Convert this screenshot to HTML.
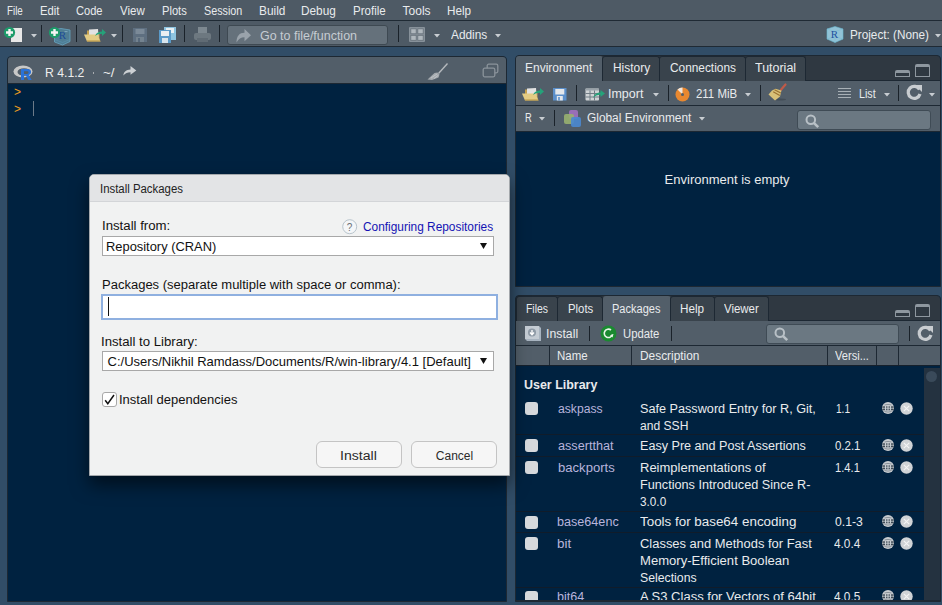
<!DOCTYPE html>
<html><head><meta charset="utf-8"><style>
html,body{margin:0;padding:0;width:942px;height:605px;overflow:hidden;background:#33506a}
body>*, body div>*{position:absolute}
div,svg{position:absolute;box-sizing:border-box}
svg{overflow:visible}
</style></head><body>
<div style="left:0px;top:0px;width:942px;height:605px;background:#314d67;"></div>
<div style="left:0px;top:0px;width:942px;height:20px;background:#4e5a65;"></div>
<div style="left:0px;top:20px;width:942px;height:1px;background:#1f2a34;"></div>
<div style="left:0px;top:21px;width:942px;height:25px;background:#4e5a65;"></div>
<div style="left:0px;top:46px;width:942px;height:1px;background:#1f2a34;"></div>
<div style="left:7.00px;top:5px;font:12px/12px 'Liberation Sans';color:#e9ebed;white-space:pre;transform:scaleX(0.8137);transform-origin:0 0;">File</div>
<div style="left:40.30px;top:5px;font:12px/12px 'Liberation Sans';color:#e9ebed;white-space:pre;transform:scaleX(0.9417);transform-origin:0 0;">Edit</div>
<div style="left:76.40px;top:5px;font:12px/12px 'Liberation Sans';color:#e9ebed;white-space:pre;transform:scaleX(0.9237);transform-origin:0 0;">Code</div>
<div style="left:120.00px;top:5px;font:12px/12px 'Liberation Sans';color:#e9ebed;white-space:pre;transform:scaleX(0.9569);transform-origin:0 0;">View</div>
<div style="left:161.50px;top:5px;font:12px/12px 'Liberation Sans';color:#e9ebed;white-space:pre;transform:scaleX(0.9296);transform-origin:0 0;">Plots</div>
<div style="left:203.60px;top:5px;font:12px/12px 'Liberation Sans';color:#e9ebed;white-space:pre;transform:scaleX(0.8972);transform-origin:0 0;">Session</div>
<div style="left:258.50px;top:5px;font:12px/12px 'Liberation Sans';color:#e9ebed;white-space:pre;transform:scaleX(0.9881);transform-origin:0 0;">Build</div>
<div style="left:301.30px;top:5px;font:12px/12px 'Liberation Sans';color:#e9ebed;white-space:pre;transform:scaleX(0.9831);transform-origin:0 0;">Debug</div>
<div style="left:352.50px;top:5px;font:12px/12px 'Liberation Sans';color:#e9ebed;white-space:pre;transform:scaleX(0.9610);transform-origin:0 0;">Profile</div>
<div style="left:402.60px;top:5px;font:12px/12px 'Liberation Sans';color:#e9ebed;white-space:pre;">Tools</div>
<div style="left:447.30px;top:5px;font:12px/12px 'Liberation Sans';color:#e9ebed;white-space:pre;transform:scaleX(0.9758);transform-origin:0 0;">Help</div>
<div style="left:41px;top:25px;width:1px;height:17px;background:#1a222a;"></div>
<div style="left:76px;top:25px;width:1px;height:17px;background:#1a222a;"></div>
<div style="left:122px;top:25px;width:1px;height:17px;background:#1a222a;"></div>
<div style="left:184px;top:25px;width:1px;height:17px;background:#1a222a;"></div>
<div style="left:219px;top:25px;width:1px;height:17px;background:#1a222a;"></div>
<div style="left:398px;top:25px;width:1px;height:17px;background:#1a222a;"></div>
<svg style="left:3px;top:26px" width="22" height="18"><rect x="8" y="2" width="11" height="14" fill="#e8e8e8"/><circle cx="6.5" cy="6.5" r="5.6" fill="#1c9c6a"/><path d="M6.5 3v7M3 6.5h7" stroke="#f4f4f4" stroke-width="2.4"/></svg>
<svg style="left:31px;top:34px" width="6" height="4"><path d="M0 0H6L3.0 3.5Z" fill="#c8cdd2"/></svg>
<svg style="left:44px;top:22px" width="32" height="24"><path d="M10.5 7.5L17 6.5L26 8V19.5L18.5 23L10.5 20z" fill="#4f7d94" stroke="#68a6c2" stroke-width=".8"/><path d="M10.5 17.5L18.5 20.5L26 17.5" fill="none" stroke="#5b94b0" stroke-width=".6"/><text x="14.8" y="17" font-size="11" fill="#1d4c98" font-family="Liberation Serif">R</text><path d="M20.5 9.6h3" stroke="#8ab4c8" stroke-width=".8"/><circle cx="10.5" cy="10.5" r="5.6" fill="#1c9c6a"/><path d="M10.5 7v7M7 10.5h7" stroke="#f4f4f4" stroke-width="2.4"/></svg>
<svg style="left:84px;top:28px" width="24" height="15"><path d="M3 2.5H9L10.5 4H15.5V13H3Z" fill="#c4a04e"/><path d="M5 1.5L14 1L14.5 9L5 9Z" fill="#e2e2e2"/><path d="M0 6.5H13.5L16.5 13.5H3Z" fill="#e4cc84"/><path d="M3 13.5H16.5L16 12.5H2.6Z" fill="#b89440"/><path d="M11 8C12.5 4.5 15 3.5 18 3.5V1L22 4.5L18 8V5.8C15.5 5.8 13 6.5 11 8Z" fill="#25a27a"/></svg>
<svg style="left:111px;top:34px" width="6" height="4"><path d="M0 0H6L3.0 3.5Z" fill="#c8cdd2"/></svg>
<svg style="left:133px;top:28px" width="15" height="15"><rect x="0" y="0" width="14" height="14" fill="#5e6f80"/><rect x="2.5" y="1" width="9" height="5" fill="#7b8a98"/><rect x="3" y="9" width="8" height="5" fill="#74838f"/><rect x="5" y="10" width="2" height="4" fill="#56687a"/></svg>
<svg style="left:159px;top:27px" width="18" height="16"><rect x="5" y="0" width="12" height="13" fill="#8ec4e0"/><rect x="7" y="1" width="8" height="5" fill="#e8f0f4"/><rect x="0" y="3" width="12" height="13" fill="#5a9ac8"/><rect x="2" y="4" width="8" height="5" fill="#e8eef2"/><rect x="3" y="11" width="6" height="5" fill="#d8e4ec"/></svg>
<svg style="left:194px;top:27px" width="17" height="16"><rect x="4" y="0" width="9" height="6" fill="#7d8890"/><rect x="0" y="6" width="17" height="7" rx="2" fill="#6d7880"/><rect x="3" y="11" width="11" height="4" fill="#606b74"/></svg>
<div style="left:227px;top:25px;width:161px;height:20px;background:#65717b;border:1px solid #3e4952;border-radius:3px"></div>
<svg style="left:236px;top:28px" width="15" height="15"><path d="M0.5 14.5C0.5 8 3.5 4.8 8.5 4.8V1L15 7.2L8.5 13.2V9.3C5 9.3 2.5 11 0.5 14.5Z" fill="#9aa3ab"/></svg>
<div style="left:259.80px;top:30px;font:12px/12px 'Liberation Sans';color:#c5ccd2;white-space:pre;transform:scaleX(1.0387);transform-origin:0 0;">Go to file/function</div>
<svg style="left:409px;top:27px" width="16" height="15"><rect x="0" y="0" width="16" height="15" rx="1" fill="#87919a"/><g fill="#afb7bd" stroke="#66717a" stroke-width=".8"><rect x="1.8" y="1.8" width="5.4" height="5"/><rect x="8.8" y="1.8" width="5.4" height="5"/><rect x="1.8" y="8.3" width="5.4" height="5"/><rect x="8.8" y="8.3" width="5.4" height="5"/></g></svg>
<svg style="left:434px;top:34px" width="6" height="4"><path d="M0 0H6L3.0 3.5Z" fill="#c8cdd2"/></svg>
<div style="left:451.00px;top:29px;font:12px/12px 'Liberation Sans';color:#e9ebed;white-space:pre;transform:scaleX(0.9893);transform-origin:0 0;">Addins</div>
<svg style="left:495px;top:34px" width="6" height="4"><path d="M0 0H6L3.0 3.5Z" fill="#c8cdd2"/></svg>
<svg style="left:826px;top:26px" width="18" height="17"><path d="M9 0.5l8 2.5v10L9 16.5 1 13V3z" fill="#92c2d6" stroke="#6ab8d0" stroke-width=".6"/><path d="M1 3L9 5.5L17 3M9 5.5v11M1 13l8-2.5 8 2.5" stroke="#78b8d0" stroke-width=".5" fill="none"/><text x="4.8" y="12.2" font-size="11" fill="#2452a0" font-family="Liberation Serif">R</text></svg>
<div style="left:849.50px;top:29px;font:12px/12px 'Liberation Sans';color:#e9ebed;white-space:pre;transform:scaleX(0.9777);transform-origin:0 0;">Project: (None)</div>
<svg style="left:935px;top:34px" width="6" height="4"><path d="M0 0H6L3.0 3.5Z" fill="#c8cdd2"/></svg>
<div style="left:7px;top:56px;width:500px;height:546px;background:#002240;border:1px solid #1d2833;box-sizing:border-box;border-radius:4px 4px 0 0"></div>
<div style="left:8px;top:57px;width:498px;height:26px;background:#525e69;border-radius:3px 3px 0 0"></div>
<div style="left:8px;top:83px;width:498px;height:1px;background:#1d2833;"></div>
<svg style="left:13px;top:64px" width="22" height="18"><ellipse cx="10" cy="7.5" rx="9.5" ry="6" fill="#c8c8c8"/><ellipse cx="11" cy="8" rx="6.5" ry="3.8" fill="#525e69"/><path d="M8 5h6.5c2.5 0 3.5 1.3 3.5 3s-1 2.6-2.3 3l3 5h-3.3l-2.6-4.5H11V16H8z M11 7.3v2.6h3c1 0 1.5-.5 1.5-1.3s-.5-1.3-1.5-1.3z" fill="#2a72d8" fill-rule="evenodd"/></svg>
<div style="left:45.26px;top:66px;font:13px/13px 'Liberation Sans';color:#eeeeee;white-space:pre;transform:scaleX(0.9390);transform-origin:0 0;">R 4.1.2</div>
<div style="left:93px;top:72px;width:1px;height:2px;background:#a8acb0"></div>
<div style="left:102.70px;top:66px;font:13px/13px 'Liberation Sans';color:#eeeeee;white-space:pre;transform:scaleX(1.0266);transform-origin:0 0;">~/</div>
<svg style="left:122.5px;top:66px" width="14" height="10"><path d="M0.3 9.5C0.8 5.5 3 3.6 7.5 3.4V0L13.3 4.5L7.5 8.8V6.2C4.5 6.2 2.5 7 0.3 9.5Z" fill="#ccd0d4"/></svg>
<svg style="left:426px;top:62px" width="24" height="20"><path d="M21.5 1.5L12.5 11.5" stroke="#b4b8bc" stroke-width="1.4"/><path d="M1.5 17.5L8.5 11L11.5 10.5L13.5 12.5L12.5 15.5L6 18z" fill="#a4a9ae"/><path d="M5 16l6-4M8 16.5l4-3" stroke="#c8ccd0" stroke-width=".7"/></svg>
<svg style="left:482px;top:63px" width="17" height="15"><rect x="5.2" y="1.2" width="10.6" height="8.6" rx="1.5" fill="none" stroke="#8a939b" stroke-width="1.3"/><rect x="1.2" y="5.2" width="11.6" height="8.6" rx="1.5" fill="#525e69" stroke="#8a939b" stroke-width="1.3"/></svg>
<div style="left:14.00px;top:86px;font:12px/12px 'Liberation Sans';color:#f0a020;white-space:pre;">&gt;</div>
<div style="left:14.00px;top:103px;font:12px/12px 'Liberation Sans';color:#f0a020;white-space:pre;">&gt;</div>
<div style="left:33px;top:101px;width:1px;height:15px;background:#6c7a88;"></div>
<div style="left:515px;top:55px;width:426px;height:232px;background:#002240;border:1px solid #1d2833;box-sizing:border-box;border-radius:4px 4px 0 0"></div>
<div style="left:516px;top:56px;width:424px;height:25px;background:#2f3841;border-radius:3px 3px 0 0"></div>
<div style="left:516px;top:80px;width:424px;height:1px;background:#1d2833;"></div>
<div style="left:516px;top:56px;width:87px;height:25px;background:#525e69;border-radius:3px 3px 0 0"></div>
<div style="left:525.00px;top:62px;font:12px/12px 'Liberation Sans';color:#e9ebed;white-space:pre;">Environment</div>
<div style="left:602px;top:56px;width:58px;height:25px;background:#39434c;border:1px solid #1d2833;border-bottom:none;border-radius:3px 3px 0 0"></div>
<div style="left:612.50px;top:62px;font:12px/12px 'Liberation Sans';color:#e9ebed;white-space:pre;transform:scaleX(0.9937);transform-origin:0 0;">History</div>
<div style="left:659px;top:56px;width:87px;height:25px;background:#39434c;border:1px solid #1d2833;border-bottom:none;border-radius:3px 3px 0 0"></div>
<div style="left:669.50px;top:62px;font:12px/12px 'Liberation Sans';color:#e9ebed;white-space:pre;transform:scaleX(0.9879);transform-origin:0 0;">Connections</div>
<div style="left:745px;top:56px;width:61px;height:25px;background:#39434c;border:1px solid #1d2833;border-bottom:none;border-radius:3px 3px 0 0"></div>
<div style="left:755.30px;top:62px;font:12px/12px 'Liberation Sans';color:#e9ebed;white-space:pre;transform:scaleX(1.0385);transform-origin:0 0;">Tutorial</div>
<svg style="left:894px;top:63px" width="38" height="15"><path d="M1 14V9a2 2 0 0 1 2-2h11a2 2 0 0 1 2 2v5z" fill="#8e979f"/><rect x="2" y="10" width="13" height="3" fill="#2f3841"/><path d="M21 14V3a2 2 0 0 1 2-2h11a2 2 0 0 1 2 2v11z" fill="#8e979f"/><rect x="22" y="4" width="13" height="9" fill="#2f3841"/></svg>
<div style="left:516px;top:81px;width:424px;height:24px;background:#525e69;"></div>
<div style="left:516px;top:105px;width:424px;height:1px;background:#1d2833;"></div>
<div style="left:516px;top:106px;width:424px;height:25px;background:#525e69;"></div>
<div style="left:516px;top:131px;width:424px;height:1px;background:#1d2833;"></div>
<div style="left:576px;top:85px;width:1px;height:16px;background:#1a222a;"></div>
<div style="left:668px;top:85px;width:1px;height:16px;background:#1a222a;"></div>
<div style="left:760px;top:85px;width:1px;height:16px;background:#1a222a;"></div>
<div style="left:898px;top:85px;width:1px;height:16px;background:#1a222a;"></div>
<div style="left:554px;top:110px;width:1px;height:16px;background:#1a222a;"></div>
<svg style="left:521.5px;top:87px" width="24" height="15"><path d="M3 2.5H9L10.5 4H15.5V13H3Z" fill="#c4a04e"/><path d="M5 1.5L14 1L14.5 9L5 9Z" fill="#e2e2e2"/><path d="M0 6.5H13.5L16.5 13.5H3Z" fill="#e4cc84"/><path d="M3 13.5H16.5L16 12.5H2.6Z" fill="#b89440"/><path d="M11 8C12.5 4.5 15 3.5 18 3.5V1L22 4.5L18 8V5.8C15.5 5.8 13 6.5 11 8Z" fill="#25a27a"/></svg>
<svg style="left:552.5px;top:87.5px" width="14" height="13"><rect x="0" y="0" width="13.5" height="12.5" fill="#5b8fca"/><rect x="2.3" y="1" width="9" height="5.5" fill="#e4e8ec"/><rect x="3.8" y="8" width="6" height="4.5" fill="#e4e8ec"/><rect x="5.2" y="9" width="1.6" height="3.5" fill="#5b8fca"/></svg>
<svg style="left:585px;top:87.5px" width="22" height="14"><rect x="0.5" y="0.5" width="13.5" height="12" rx="1" fill="#cfd3d6"/><rect x="0.5" y="0.5" width="13.5" height="2" fill="#9aa3aa"/><path d="M0.5 5.5h13.5M0.5 9h13.5M5 2.5v10M9.5 2.5v10" stroke="#717c85" stroke-width="1"/><path d="M8 10C9.5 6 12 4.5 15.5 4.5V2L20 5.5L15.5 9V6.8C12.5 6.8 10 7.8 8 10Z" fill="#25a27a"/></svg>
<div style="left:607.96px;top:88px;font:12px/12px 'Liberation Sans';color:#e9ebed;white-space:pre;transform:scaleX(1.0394);transform-origin:0 0;">Import</div>
<svg style="left:653px;top:93px" width="6" height="4"><path d="M0 0H6L3.0 3.5Z" fill="#c8cdd2"/></svg>
<svg style="left:675px;top:87px" width="15" height="15"><circle cx="7.5" cy="7.5" r="7" fill="#e88830"/><path d="M7.5 7.5V0.5A7 7 0 0 0 2.5 2.6z" fill="#f0e8e0"/><circle cx="7.5" cy="7.5" r="1.5" fill="#525e69"/></svg>
<div style="left:695.50px;top:88px;font:12px/12px 'Liberation Sans';color:#e9ebed;white-space:pre;transform:scaleX(0.9530);transform-origin:0 0;">211 MiB</div>
<svg style="left:745px;top:93px" width="6" height="4"><path d="M0 0H6L3.0 3.5Z" fill="#c8cdd2"/></svg>
<svg style="left:760px;top:80px" width="30" height="26"><ellipse cx="20" cy="19.5" rx="6" ry="1" fill="#3a444c" opacity=".6"/><path d="M25.5 4.5L21 9.8" stroke="#c05a48" stroke-width="2.2" stroke-linecap="round"/><path d="M15.5 8.8L21.5 10.5L20 16.5L15 20.5L8.5 14.5L12 10.5z" fill="#d8c078"/><path d="M14.5 9.8L20.8 13M13.2 11.8L19.8 15.5" stroke="#9a7030" stroke-width="1.1"/></svg>
<svg style="left:838px;top:88px" width="14" height="11"><path d="M0 .5h13M0 3.5h13M0 6.5h13M0 9.5h13" stroke="#a8b0b6" stroke-width="1"/></svg>
<div style="left:858.50px;top:88px;font:12px/12px 'Liberation Sans';color:#e9ebed;white-space:pre;transform:scaleX(0.8945);transform-origin:0 0;">List</div>
<svg style="left:884px;top:93px" width="6" height="4"><path d="M0 0H6L3.0 3.5Z" fill="#c8cdd2"/></svg>
<svg style="left:906px;top:84px" width="17" height="17"><path d="M13.5 5.5A6 6 0 1 0 14 10" fill="none" stroke="#c8ccd0" stroke-width="3.2"/><path d="M9 1h7v7z" fill="#c8ccd0"/></svg>
<svg style="left:929px;top:93px" width="6" height="4"><path d="M0 0H6L3.0 3.5Z" fill="#c8cdd2"/></svg>
<div style="left:525.00px;top:112px;font:12px/12px 'Liberation Sans';color:#e9ebed;white-space:pre;transform:scaleX(0.7778);transform-origin:0 0;">R</div>
<svg style="left:539px;top:117px" width="6" height="4"><path d="M0 0H6L3.0 3.5Z" fill="#c8cdd2"/></svg>
<svg style="left:564px;top:110px" width="18" height="17"><rect x="5" y="0" width="9" height="9" rx="2" fill="#a070c0" opacity=".9"/><rect x="0" y="4" width="10" height="10" rx="2" fill="#98b070" opacity=".9"/><rect x="7" y="7" width="10" height="10" rx="2" fill="#4a88d0" opacity=".9"/></svg>
<div style="left:587.00px;top:112px;font:12px/12px 'Liberation Sans';color:#e9ebed;white-space:pre;transform:scaleX(0.9901);transform-origin:0 0;">Global Environment</div>
<svg style="left:699px;top:117px" width="6" height="4"><path d="M0 0H6L3.0 3.5Z" fill="#c8cdd2"/></svg>
<div style="left:797px;top:110px;width:134px;height:20px;background:#6b7882;border:1px solid #3f4b55;border-radius:3px"></div>
<svg style="left:805px;top:114px" width="15" height="15"><circle cx="5.8" cy="5.8" r="4.3" fill="none" stroke="#b8c0c6" stroke-width="2"/><path d="M8.8 8.8l4.4 4.4" stroke="#b8c0c6" stroke-width="2.6"/></svg>
<div style="left:664.60px;top:173px;font:13px/13px 'Liberation Sans';color:#e9ebed;white-space:pre;">Environment is empty</div>
<div style="left:515px;top:295px;width:426px;height:307px;background:#002240;border:1px solid #1d2833;box-sizing:border-box;border-radius:4px 4px 0 0"></div>
<div style="left:516px;top:296px;width:424px;height:25px;background:#2f3841;border-radius:3px 3px 0 0"></div>
<div style="left:516px;top:320px;width:424px;height:1px;background:#1d2833;"></div>
<div style="left:516px;top:296px;width:42px;height:25px;background:#39434c;border:1px solid #1d2833;border-bottom:none;border-radius:3px 3px 0 0"></div>
<div style="left:525.50px;top:303px;font:12px/12px 'Liberation Sans';color:#e9ebed;white-space:pre;transform:scaleX(0.8683);transform-origin:0 0;">Files</div>
<div style="left:557px;top:296px;width:46px;height:25px;background:#39434c;border:1px solid #1d2833;border-bottom:none;border-radius:3px 3px 0 0"></div>
<div style="left:567.50px;top:303px;font:12px/12px 'Liberation Sans';color:#e9ebed;white-space:pre;transform:scaleX(0.9446);transform-origin:0 0;">Plots</div>
<div style="left:603px;top:296px;width:68px;height:25px;background:#525e69;border-radius:3px 3px 0 0"></div>
<div style="left:612.40px;top:303px;font:12px/12px 'Liberation Sans';color:#e9ebed;white-space:pre;transform:scaleX(0.9184);transform-origin:0 0;">Packages</div>
<div style="left:670px;top:296px;width:45px;height:25px;background:#39434c;border:1px solid #1d2833;border-bottom:none;border-radius:3px 3px 0 0"></div>
<div style="left:680.30px;top:303px;font:12px/12px 'Liberation Sans';color:#e9ebed;white-space:pre;transform:scaleX(0.9758);transform-origin:0 0;">Help</div>
<div style="left:714px;top:296px;width:55px;height:25px;background:#39434c;border:1px solid #1d2833;border-bottom:none;border-radius:3px 3px 0 0"></div>
<div style="left:724.20px;top:303px;font:12px/12px 'Liberation Sans';color:#e9ebed;white-space:pre;transform:scaleX(0.9543);transform-origin:0 0;">Viewer</div>
<svg style="left:894px;top:303px" width="38" height="15"><path d="M1 14V9a2 2 0 0 1 2-2h11a2 2 0 0 1 2 2v5z" fill="#8e979f"/><rect x="2" y="10" width="13" height="3" fill="#2f3841"/><path d="M21 14V3a2 2 0 0 1 2-2h11a2 2 0 0 1 2 2v11z" fill="#8e979f"/><rect x="22" y="4" width="13" height="9" fill="#2f3841"/></svg>
<div style="left:516px;top:321px;width:424px;height:24px;background:#525e69;"></div>
<div style="left:516px;top:345px;width:424px;height:1px;background:#1d2833;"></div>
<svg style="left:523px;top:324px" width="20" height="18"><path d="M2 2h14l2 2v13H4l-2-2z" fill="#a8b4c0"/><rect x="2" y="2" width="14" height="13" fill="#c4ccd4"/><circle cx="9" cy="8.5" r="4" fill="#8e9aa6"/><path d="M9 6v4M7 8.5l2 2.3 2-2.3" stroke="#fff" stroke-width="1.3" fill="none"/></svg>
<div style="left:546.18px;top:328px;font:12px/12px 'Liberation Sans';color:#e9ebed;white-space:pre;transform:scaleX(1.0242);transform-origin:0 0;">Install</div>
<div style="left:589px;top:326px;width:1px;height:15px;background:#1a222a;"></div>
<svg style="left:600px;top:325px" width="17" height="17"><circle cx="8.5" cy="8.5" r="8" fill="#1a8a30"/><path d="M12.5 9.5A4.2 4.2 0 1 1 11 5" fill="none" stroke="#e8f4e8" stroke-width="1.6"/><path d="M13.5 9l-1 3.5-2.5-2z" fill="#e8f4e8"/></svg>
<div style="left:622.50px;top:328px;font:12px/12px 'Liberation Sans';color:#e9ebed;white-space:pre;transform:scaleX(0.9405);transform-origin:0 0;">Update</div>
<div style="left:671px;top:326px;width:1px;height:15px;background:#1a222a;"></div>
<div style="left:766px;top:324px;width:133px;height:20px;background:#6b7882;border:1px solid #3f4b55;border-radius:3px"></div>
<svg style="left:774px;top:327px" width="15" height="15"><circle cx="5.8" cy="5.8" r="4.3" fill="none" stroke="#b8c0c6" stroke-width="2"/><path d="M8.8 8.8l4.4 4.4" stroke="#b8c0c6" stroke-width="2.6"/></svg>
<div style="left:909px;top:326px;width:1px;height:15px;background:#1a222a;"></div>
<svg style="left:917px;top:325px" width="17" height="17"><path d="M13.5 5.5A6 6 0 1 0 14 10" fill="none" stroke="#c8ccd0" stroke-width="3.2"/><path d="M9 1h7v7z" fill="#c8ccd0"/></svg>
<div style="left:516px;top:346px;width:424px;height:19px;background:#525e69;"></div>
<div style="left:516px;top:365px;width:424px;height:1px;background:#15202c;"></div>
<div style="left:549px;top:346px;width:1px;height:19px;background:#1d2833;"></div>
<div style="left:631px;top:346px;width:1px;height:19px;background:#1d2833;"></div>
<div style="left:827px;top:346px;width:1px;height:19px;background:#1d2833;"></div>
<div style="left:876px;top:346px;width:1px;height:19px;background:#1d2833;"></div>
<div style="left:898px;top:346px;width:1px;height:19px;background:#1d2833;"></div>
<div style="left:557.40px;top:350px;font:12px/12px 'Liberation Sans';color:#e9ebed;white-space:pre;transform:scaleX(0.9556);transform-origin:0 0;">Name</div>
<div style="left:639.60px;top:350px;font:12px/12px 'Liberation Sans';color:#e9ebed;white-space:pre;transform:scaleX(0.9907);transform-origin:0 0;">Description</div>
<div style="left:835.00px;top:350px;font:12px/12px 'Liberation Sans';color:#e9ebed;white-space:pre;transform:scaleX(0.9245);transform-origin:0 0;">Versi...</div>
<div style="left:924px;top:368px;width:16px;height:232px;background:#243240;"></div>
<div style="left:926px;top:371px;width:11px;height:11px;border-radius:50%;background:#3a4a5a"></div>
<div style="left:523.80px;top:379px;font:bold 12px/12px 'Liberation Sans';color:#e9ebed;white-space:pre;transform:scaleX(1.0377);transform-origin:0 0;">User Library</div>
<div style="left:0;top:0;width:924px;height:600px;overflow:hidden">
<div style="left:525px;top:402px;width:13px;height:13px;border-radius:3px;background:#d6d9dc"></div>
<div style="left:557.70px;top:403px;font:12px/12px 'Liberation Sans';color:#b8b4dc;white-space:pre;transform:scaleX(1.0131);transform-origin:0 0;">askpass</div>
<div style="left:639.60px;top:403px;font:12px/12px 'Liberation Sans';color:#e9ebed;white-space:pre;transform:scaleX(1.0548);transform-origin:0 0;">Safe Password Entry for R, Git,</div>
<div style="left:639.60px;top:420px;font:12px/12px 'Liberation Sans';color:#e9ebed;white-space:pre;transform:scaleX(1.0071);transform-origin:0 0;">and SSH</div>
<div style="left:835.50px;top:403px;font:12px/12px 'Liberation Sans';color:#e9ebed;white-space:pre;transform:scaleX(0.8408);transform-origin:0 0;">1.1</div>
<svg style="left:882px;top:402px" width="13" height="13"><circle cx="6" cy="6" r="6" fill="#c8ccd0"/><rect x="0.5" y="4.5" width="11" height="3.7" fill="#8e989f"/><path d="M0.3 5h11.4M0.3 7.7h11.4" stroke="#2c3844" stroke-width="1"/><path d="M3.6 4v4.5M6 4v4.5M8.4 4v4.5" stroke="#d4d8dc" stroke-width="1"/><path d="M2.5 3Q6 1.8 9.5 3M2.5 9.5Q6 10.7 9.5 9.5" stroke="#6f7981" stroke-width=".7" fill="none"/></svg>
<svg style="left:900px;top:402px" width="13" height="13"><circle cx="6.5" cy="6.5" r="6.2" fill="#d0d3d6"/><path d="M3.8 3.8l5.4 5.4M9.2 3.8l-5.4 5.4" stroke="#f4f4f4" stroke-width="1.1"/></svg>
<div style="left:516px;top:434px;width:408px;height:1px;background:#101c2a;"></div>
<div style="left:525px;top:439px;width:13px;height:13px;border-radius:3px;background:#d6d9dc"></div>
<div style="left:557.70px;top:440px;font:12px/12px 'Liberation Sans';color:#b8b4dc;white-space:pre;transform:scaleX(1.0551);transform-origin:0 0;">assertthat</div>
<div style="left:639.60px;top:440px;font:12px/12px 'Liberation Sans';color:#e9ebed;white-space:pre;transform:scaleX(1.0495);transform-origin:0 0;">Easy Pre and Post Assertions</div>
<div style="left:834.50px;top:440px;font:12px/12px 'Liberation Sans';color:#e9ebed;white-space:pre;transform:scaleX(0.9550);transform-origin:0 0;">0.2.1</div>
<svg style="left:882px;top:439px" width="13" height="13"><circle cx="6" cy="6" r="6" fill="#c8ccd0"/><rect x="0.5" y="4.5" width="11" height="3.7" fill="#8e989f"/><path d="M0.3 5h11.4M0.3 7.7h11.4" stroke="#2c3844" stroke-width="1"/><path d="M3.6 4v4.5M6 4v4.5M8.4 4v4.5" stroke="#d4d8dc" stroke-width="1"/><path d="M2.5 3Q6 1.8 9.5 3M2.5 9.5Q6 10.7 9.5 9.5" stroke="#6f7981" stroke-width=".7" fill="none"/></svg>
<svg style="left:900px;top:439px" width="13" height="13"><circle cx="6.5" cy="6.5" r="6.2" fill="#d0d3d6"/><path d="M3.8 3.8l5.4 5.4M9.2 3.8l-5.4 5.4" stroke="#f4f4f4" stroke-width="1.1"/></svg>
<div style="left:516px;top:456px;width:408px;height:1px;background:#101c2a;"></div>
<div style="left:525px;top:461px;width:13px;height:13px;border-radius:3px;background:#d6d9dc"></div>
<div style="left:557.70px;top:462px;font:12px/12px 'Liberation Sans';color:#b8b4dc;white-space:pre;transform:scaleX(1.0899);transform-origin:0 0;">backports</div>
<div style="left:639.60px;top:462px;font:12px/12px 'Liberation Sans';color:#e9ebed;white-space:pre;transform:scaleX(1.0821);transform-origin:0 0;">Reimplementations of</div>
<div style="left:639.60px;top:479px;font:12px/12px 'Liberation Sans';color:#e9ebed;white-space:pre;transform:scaleX(1.0556);transform-origin:0 0;">Functions Introduced Since R-</div>
<div style="left:639.60px;top:496px;font:12px/12px 'Liberation Sans';color:#e9ebed;white-space:pre;transform:scaleX(0.9809);transform-origin:0 0;">3.0.0</div>
<div style="left:835.10px;top:462px;font:12px/12px 'Liberation Sans';color:#e9ebed;white-space:pre;transform:scaleX(0.9328);transform-origin:0 0;">1.4.1</div>
<svg style="left:882px;top:461px" width="13" height="13"><circle cx="6" cy="6" r="6" fill="#c8ccd0"/><rect x="0.5" y="4.5" width="11" height="3.7" fill="#8e989f"/><path d="M0.3 5h11.4M0.3 7.7h11.4" stroke="#2c3844" stroke-width="1"/><path d="M3.6 4v4.5M6 4v4.5M8.4 4v4.5" stroke="#d4d8dc" stroke-width="1"/><path d="M2.5 3Q6 1.8 9.5 3M2.5 9.5Q6 10.7 9.5 9.5" stroke="#6f7981" stroke-width=".7" fill="none"/></svg>
<svg style="left:900px;top:461px" width="13" height="13"><circle cx="6.5" cy="6.5" r="6.2" fill="#d0d3d6"/><path d="M3.8 3.8l5.4 5.4M9.2 3.8l-5.4 5.4" stroke="#f4f4f4" stroke-width="1.1"/></svg>
<div style="left:516px;top:511px;width:408px;height:1px;background:#101c2a;"></div>
<div style="left:525px;top:516px;width:13px;height:13px;border-radius:3px;background:#d6d9dc"></div>
<div style="left:557.40px;top:516px;font:12px/12px 'Liberation Sans';color:#b8b4dc;white-space:pre;transform:scaleX(1.0508);transform-origin:0 0;">base64enc</div>
<div style="left:639.60px;top:516px;font:12px/12px 'Liberation Sans';color:#e9ebed;white-space:pre;transform:scaleX(1.1160);transform-origin:0 0;">Tools for base64 encoding</div>
<div style="left:834.50px;top:516px;font:12px/12px 'Liberation Sans';color:#e9ebed;white-space:pre;transform:scaleX(1.0153);transform-origin:0 0;">0.1-3</div>
<svg style="left:882px;top:515px" width="13" height="13"><circle cx="6" cy="6" r="6" fill="#c8ccd0"/><rect x="0.5" y="4.5" width="11" height="3.7" fill="#8e989f"/><path d="M0.3 5h11.4M0.3 7.7h11.4" stroke="#2c3844" stroke-width="1"/><path d="M3.6 4v4.5M6 4v4.5M8.4 4v4.5" stroke="#d4d8dc" stroke-width="1"/><path d="M2.5 3Q6 1.8 9.5 3M2.5 9.5Q6 10.7 9.5 9.5" stroke="#6f7981" stroke-width=".7" fill="none"/></svg>
<svg style="left:900px;top:515px" width="13" height="13"><circle cx="6.5" cy="6.5" r="6.2" fill="#d0d3d6"/><path d="M3.8 3.8l5.4 5.4M9.2 3.8l-5.4 5.4" stroke="#f4f4f4" stroke-width="1.1"/></svg>
<div style="left:516px;top:532px;width:408px;height:1px;background:#101c2a;"></div>
<div style="left:525px;top:537px;width:13px;height:13px;border-radius:3px;background:#d6d9dc"></div>
<div style="left:557.40px;top:538px;font:12px/12px 'Liberation Sans';color:#b8b4dc;white-space:pre;transform:scaleX(1.1170);transform-origin:0 0;">bit</div>
<div style="left:639.60px;top:538px;font:12px/12px 'Liberation Sans';color:#e9ebed;white-space:pre;transform:scaleX(1.0783);transform-origin:0 0;">Classes and Methods for Fast</div>
<div style="left:639.60px;top:555px;font:12px/12px 'Liberation Sans';color:#e9ebed;white-space:pre;transform:scaleX(1.0886);transform-origin:0 0;">Memory-Efficient Boolean</div>
<div style="left:639.60px;top:572px;font:12px/12px 'Liberation Sans';color:#e9ebed;white-space:pre;transform:scaleX(1.0223);transform-origin:0 0;">Selections</div>
<div style="left:833.70px;top:538px;font:12px/12px 'Liberation Sans';color:#e9ebed;white-space:pre;transform:scaleX(0.9846);transform-origin:0 0;">4.0.4</div>
<svg style="left:882px;top:537px" width="13" height="13"><circle cx="6" cy="6" r="6" fill="#c8ccd0"/><rect x="0.5" y="4.5" width="11" height="3.7" fill="#8e989f"/><path d="M0.3 5h11.4M0.3 7.7h11.4" stroke="#2c3844" stroke-width="1"/><path d="M3.6 4v4.5M6 4v4.5M8.4 4v4.5" stroke="#d4d8dc" stroke-width="1"/><path d="M2.5 3Q6 1.8 9.5 3M2.5 9.5Q6 10.7 9.5 9.5" stroke="#6f7981" stroke-width=".7" fill="none"/></svg>
<svg style="left:900px;top:537px" width="13" height="13"><circle cx="6.5" cy="6.5" r="6.2" fill="#d0d3d6"/><path d="M3.8 3.8l5.4 5.4M9.2 3.8l-5.4 5.4" stroke="#f4f4f4" stroke-width="1.1"/></svg>
<div style="left:516px;top:587px;width:408px;height:1px;background:#101c2a;"></div>
<div style="left:525px;top:591px;width:13px;height:13px;border-radius:3px;background:#d6d9dc"></div>
<div style="left:557.40px;top:591px;font:12px/12px 'Liberation Sans';color:#b8b4dc;white-space:pre;transform:scaleX(1.0475);transform-origin:0 0;">bit64</div>
<div style="left:639.60px;top:591px;font:12px/12px 'Liberation Sans';color:#e9ebed;white-space:pre;transform:scaleX(1.0844);transform-origin:0 0;">A S3 Class for Vectors of 64bit</div>
<div style="left:833.70px;top:591px;font:12px/12px 'Liberation Sans';color:#e9ebed;white-space:pre;transform:scaleX(0.9846);transform-origin:0 0;">4.0.5</div>
<svg style="left:882px;top:590px" width="13" height="13"><circle cx="6" cy="6" r="6" fill="#c8ccd0"/><rect x="0.5" y="4.5" width="11" height="3.7" fill="#8e989f"/><path d="M0.3 5h11.4M0.3 7.7h11.4" stroke="#2c3844" stroke-width="1"/><path d="M3.6 4v4.5M6 4v4.5M8.4 4v4.5" stroke="#d4d8dc" stroke-width="1"/><path d="M2.5 3Q6 1.8 9.5 3M2.5 9.5Q6 10.7 9.5 9.5" stroke="#6f7981" stroke-width=".7" fill="none"/></svg>
<svg style="left:900px;top:590px" width="13" height="13"><circle cx="6.5" cy="6.5" r="6.2" fill="#d0d3d6"/><path d="M3.8 3.8l5.4 5.4M9.2 3.8l-5.4 5.4" stroke="#f4f4f4" stroke-width="1.1"/></svg>
</div>
<div style="left:516px;top:600px;width:424px;height:1px;background:#1d2833;"></div>
<div style="left:89px;top:174px;width:421px;height:302px;background:#f1f2f2;border:1px solid #a4a8ac;border-radius:5px 5px 0 0;box-shadow:0 9px 18px rgba(0,0,0,.55)"></div>
<div style="left:90px;top:175px;width:419px;height:26px;background:#e3e4e6;border-radius:4px 4px 0 0"></div>
<div style="left:90px;top:201px;width:419px;height:1px;background:#d3d5d8;"></div>
<div style="left:100.05px;top:183px;font:12px/12px 'Liberation Sans';color:#222;white-space:pre;transform:scaleX(0.9493);transform-origin:0 0;">Install Packages</div>
<div style="left:101.50px;top:220px;font:12px/12px 'Liberation Sans';color:#111;white-space:pre;transform:scaleX(1.1008);transform-origin:0 0;">Install from:</div>
<svg style="left:342px;top:219px" width="16" height="16"><circle cx="7.7" cy="7.7" r="7" fill="#f4f6f8" stroke="#b8c4cc" stroke-width="1"/><text x="4.8" y="11.6" font-size="10" font-family="Liberation Sans" fill="#6a6f74">?</text></svg>
<div style="left:363.30px;top:221px;font:12px/12px 'Liberation Sans';color:#1414b4;white-space:pre;transform:scaleX(0.9901);transform-origin:0 0;">Configuring Repositories</div>
<div style="left:102px;top:236px;width:392px;height:20px;background:#fff;border:1px solid #a8a8a8"></div>
<div style="left:106.41px;top:240px;font:13px/13px 'Liberation Sans';color:#111;white-space:pre;transform:scaleX(0.9908);transform-origin:0 0;">Repository (CRAN)</div>
<svg style="left:480px;top:243px" width="7" height="6"><path d="M0 0h7L3.5 6z" fill="#111"/></svg>
<div style="left:102.40px;top:279px;font:12px/12px 'Liberation Sans';color:#111;white-space:pre;transform:scaleX(1.0839);transform-origin:0 0;">Packages (separate multiple with space or comma):</div>
<div style="left:101px;top:294px;width:397px;height:26px;background:#fff;border:2px solid #8fb0e0"></div>
<div style="left:108px;top:297px;width:1px;height:19px;background:#111;"></div>
<div style="left:101.30px;top:336px;font:12px/12px 'Liberation Sans';color:#111;white-space:pre;transform:scaleX(1.0980);transform-origin:0 0;">Install to Library:</div>
<div style="left:102px;top:351px;width:392px;height:20px;background:#fff;border:1px solid #a8a8a8"></div>
<div style="left:107.60px;top:355px;font:13px/13px 'Liberation Sans';color:#111;white-space:pre;">C:/Users/Nikhil Ramdass/Documents/R/win-library/4.1 [Default]</div>
<svg style="left:480px;top:358px" width="7" height="6"><path d="M0 0h7L3.5 6z" fill="#111"/></svg>
<div style="left:102px;top:392px;width:15px;height:15px;background:#fff;border:1px solid #a8a8a8;border-radius:3px"></div>
<svg style="left:102px;top:392px" width="15" height="15"><path d="M3.2 8.2l2.6 3.6L12 3" fill="none" stroke="#111" stroke-width="1.5"/></svg>
<div style="left:118.92px;top:394px;font:12px/12px 'Liberation Sans';color:#111;white-space:pre;transform:scaleX(1.0820);transform-origin:0 0;">Install dependencies</div>
<div style="left:316px;top:441px;width:86px;height:27px;background:#f6f6f6;border:1px solid #c4c4c4;border-radius:6px"></div>
<div style="left:411px;top:441px;width:86px;height:27px;background:#f6f6f6;border:1px solid #c4c4c4;border-radius:6px"></div>
<div style="left:340.33px;top:450px;font:12px/12px 'Liberation Sans';color:#2a2a2a;white-space:pre;transform:scaleX(1.1724);transform-origin:0 0;">Install</div>
<div style="left:435.80px;top:450px;font:12px/12px 'Liberation Sans';color:#2a2a2a;white-space:pre;">Cancel</div>
</body></html>
